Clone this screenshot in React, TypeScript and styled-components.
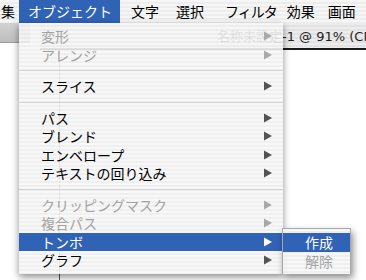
import React from "react";
import styled, { createGlobalStyle } from "styled-components";

const Global = createGlobalStyle`
  html, body { margin: 0; padding: 0; background: #fff; }
  body { font-family: "Noto Sans CJK JP", "Liberation Sans", sans-serif; }
`;

const JP = `"Noto Sans CJK JP", "Liberation Sans", sans-serif`;
const BLUE = "#3062b5";

const Screen = styled.div`
  position: relative;
  width: 366px;
  height: 280px;
  overflow: hidden;
  background: #fff;
`;

const MenuBar = styled.div`
  position: relative;
  z-index: 3;
  display: flex;
  height: 23px;
  background: repeating-linear-gradient(to bottom, #f6f6f6 0 2px, #ededed 2px 4px);
  font-family: ${JP};
  font-size: 14px;
  white-space: nowrap;
`;

const MenuTitle = styled.div<{ $l: number; $r: number; $on?: boolean; $tight?: boolean }>`
  display: flex;
  align-items: center;
  padding: 0 ${(p) => p.$r}px 0 ${(p) => p.$l}px;
  color: ${(p) => (p.$on ? "#fff" : "#000")};
  background: ${(p) => (p.$on ? BLUE : "transparent")};
  letter-spacing: ${(p) => (p.$tight ? "-1px" : "0")};
  line-height: 23px;
`;

/* background windows on the desktop */
const Palette = styled.div`
  position: absolute;
  left: 0;
  top: 23px;
  width: 30px;
  height: 19px;
  background: linear-gradient(to bottom, #d2d2d2, #bdbdbd);
  border-bottom: 1px solid #9a9a9a;
`;

const DocWindow = styled.div`
  position: absolute;
  left: 40px;
  top: 23px;
  right: -20px;
  bottom: -20px;
  display: flex;
  flex-direction: column;
`;

const TitleBar = styled.div`
  display: flex;
  align-items: center;
  gap: 10px;
  height: 25px;
  padding-left: 167px;
  background: repeating-linear-gradient(to bottom, #ececec 0 2px, #e2e2e2 2px 4px);
  border-bottom: 2px solid #1a1a1a;
  font-family: ${JP};
  font-size: 13px;
  color: #1e1e1e;
  white-space: nowrap;
`;

const TitleLatin = styled.span`
  font-family: "DejaVu Sans", "Liberation Sans", sans-serif;
  font-size: 13px;
`;

const Canvas = styled.div`
  flex: 1;
  background: #fff;
  padding-left: 19px;
`;

const ArtboardEdge = styled.div`
  width: 1px;
  height: 100%;
  background: #555;
`;

/* menus */
const Menu = styled.div`
  position: absolute;
  z-index: 4;
  left: 19px;
  top: 23px;
  width: 264px;
  padding: 4px 0;
  background: repeating-linear-gradient(
    to bottom,
    rgba(247, 247, 247, 0.9) 0 2px,
    rgba(238, 238, 238, 0.9) 2px 4px
  );
  box-shadow: 0 3px 7px rgba(0, 0, 0, 0.45);
  font-family: ${JP};
  font-size: 14px;
`;

const Row = styled.div<{ $disabled?: boolean; $active?: boolean }>`
  display: flex;
  align-items: center;
  justify-content: space-between;
  height: 18.5px;
  padding: 0 11px 0 22px;
  color: ${(p) => (p.$active ? "#fff" : p.$disabled ? "#a3a3a3" : "#000")};
  background: ${(p) => (p.$active ? BLUE : "transparent")};
  white-space: nowrap;
`;

const Label = styled.span`
  line-height: 18px;
`;

const Separator = styled.div`
  height: 13px;
  display: flex;
  align-items: center;
  &::after {
    content: "";
    flex: 1;
    height: 1px;
    background: #d2d2d2;
  }
`;

const SubMenu = styled.div`
  position: absolute;
  z-index: 5;
  left: 282px;
  top: 228px;
  width: 67px;
  padding: 4px 0;
  border: 1px solid #a8a8a8;
  border-bottom: none;
  background: repeating-linear-gradient(
    to bottom,
    rgba(247, 247, 247, 0.95) 0 2px,
    rgba(238, 238, 238, 0.95) 2px 4px
  );
  box-shadow: 2px 4px 7px rgba(0, 0, 0, 0.45);
  font-family: ${JP};
  font-size: 14px;
`;

const SubRow = styled.div<{ $disabled?: boolean; $active?: boolean }>`
  height: 18.5px;
  line-height: 18px;
  padding-left: 22px;
  color: ${(p) => (p.$active ? "#fff" : p.$disabled ? "#a3a3a3" : "#000")};
  background: ${(p) => (p.$active ? BLUE : "transparent")};
`;

const Arrow = ({ color }: { color: string }) => (
  <svg width="8" height="10" viewBox="0 0 8 10">
    <polygon points="0,0.5 8,5 0,9.5" fill={color} />
  </svg>
);

const DocIcon = () => (
  <svg width="12" height="13" viewBox="0 0 12 13">
    <rect x="1" y="1" width="9" height="11" fill="#f3d6d6" stroke="#d78b8b" />
    <rect x="3" y="4" width="7" height="5" fill="#e25a5a" />
  </svg>
);

type Item =
  | { sep: true }
  | { sep?: false; label: string; disabled?: boolean; active?: boolean };

const items: Item[] = [
  { label: "変形", disabled: true },
  { label: "アレンジ", disabled: true },
  { sep: true },
  { label: "スライス" },
  { sep: true },
  { label: "パス" },
  { label: "ブレンド" },
  { label: "エンベロープ" },
  { label: "テキストの回り込み" },
  { sep: true },
  { label: "クリッピングマスク", disabled: true },
  { label: "複合パス", disabled: true },
  { label: "トンボ", active: true },
  { label: "グラフ" },
];

const titles: { t: string; l: number; r: number; on?: boolean; tight?: boolean }[] = [
  { t: "集", l: 1, r: 4 },
  { t: "オブジェクト", l: 9, r: 8, on: true },
  { t: "文字", l: 11, r: 8 },
  { t: "選択", l: 9, r: 10 },
  { t: "フィルタ", l: 11, r: 4, tight: true },
  { t: "効果", l: 6, r: 4 },
  { t: "画面", l: 9, r: 9 },
];

export default function App() {
  return (
    <Screen>
      <Global />
      <MenuBar>
        {titles.map((m) => (
          <MenuTitle key={m.t} $l={m.l} $r={m.r} $on={m.on} $tight={m.tight}>
            {m.t}
          </MenuTitle>
        ))}
      </MenuBar>

      <Palette />
      <DocWindow>
        <TitleBar>
          <DocIcon />
          <span>
            名称未設定<TitleLatin>-1 @ 91% (CMYK/プレビュー)</TitleLatin>
          </span>
        </TitleBar>
        <Canvas>
          <ArtboardEdge />
        </Canvas>
      </DocWindow>

      <Menu>
        {items.map((it, i) =>
          it.sep ? (
            <Separator key={i} />
          ) : (
            <Row key={i} $disabled={it.disabled} $active={it.active}>
              <Label>{it.label}</Label>
              <Arrow color={it.active ? "#fff" : it.disabled ? "#a9a9a9" : "#535353"} />
            </Row>
          )
        )}
      </Menu>

      <SubMenu>
        <SubRow $active>作成</SubRow>
        <SubRow $disabled>解除</SubRow>
      </SubMenu>
    </Screen>
  );
}
